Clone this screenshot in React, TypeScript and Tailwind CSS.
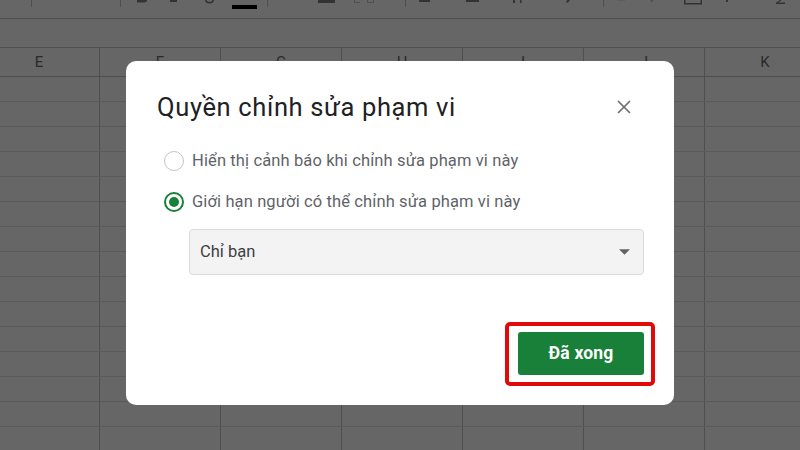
const columns = ["E", "F", "G", "H", "I", "J", "K"];

const Cell = ({ first, last, children }: { first?: boolean; last?: boolean; children?: React.ReactNode }) => (
  <div className={`${first ? "w-[100px] pr-[21px]" : last ? "flex-1 pl-[25px]" : "w-[121px]"} ${last ? "" : "border-r border-[#4f4f4f]"} flex items-center justify-center`}>
    {children}
  </div>
);

function Toolbar() {
  return (
    <div className="relative h-[19px] border-b border-[#4f4f4f] overflow-hidden">
      {/* the top of the sheet is cut off, only the lower ends of the icons show */}
      <svg width="800" height="18" className="block" fill="#333">
        <g fill="#4f4f4f">
          <rect x="31" y="0" width="1" height="7" />
          <rect x="120" y="0" width="1" height="7" />
          <rect x="267" y="0" width="1" height="7" />
          <rect x="405" y="0" width="1" height="7" />
          <rect x="603" y="0" width="1" height="7" />
        </g>
        <path d="M137 0h10v1q-1 1.500-4 1.500h-6z" />
        <rect x="170" y="0" width="7" height="2" />
        <path d="M205 0h1.500q.5 2 3 2t3-2h1.500q-.5 3.500-4.500 3.500t-4.500-3.500z" />
        <rect x="232" y="5" width="25" height="4" fill="#000" />
        <rect x="318" y="0" width="17" height="3" />
        <path d="M354 0h1v2h5v1h-6zM367 0h1v2h5v-2h1v3h-7z" fill="#505050" />
        <rect x="419" y="0" width="11" height="2" />
        <rect x="466" y="0" width="13" height="2" />
        <path d="M513 0h2v3h-2zM520 0h1.500v3h-1.500z" />
        <path d="M567 0h3l-2 2.500h-2z" />
        <path d="M651 0h3l-2 2h-2z" fill="#505050" />
        <path d="M617 0h8v1h-8z" fill="#5c5c5c" />
        <path d="M684 0h1.500v3h15v-3h1.500v4.500h-18z" />
        <rect x="726" y="0" width="2" height="2" />
        <path d="M778 0h3v1l-3 1.500h7v1.500h-9v-1.500l4-2z" />
      </svg>
    </div>
  );
}

export default function App() {
  return (
    <div className="relative w-[800px] h-[450px] overflow-hidden bg-[#666666] font-['Roboto',sans-serif]">
      <Toolbar />
      <div className="h-[29px] border-b border-[#4f4f4f]" />
      <div className="flex h-[29px] border-b border-[#4f4f4f] text-[15px] text-[#2a2a2a]">
        {columns.map((c, i) => (
          <Cell key={c} first={i === 0} last={i === columns.length - 1}>{c}</Cell>
        ))}
      </div>
      {Array.from({ length: 15 }).map((_, r) => (
        <div key={r} className="flex h-[25px] border-b border-[#5a5a5a]">
          {columns.map((c, i) => (
            <Cell key={c} first={i === 0} last={i === columns.length - 1} />
          ))}
        </div>
      ))}

      <div className="absolute inset-0 flex justify-center pt-[61px]">
        <div className="w-[548px] h-[344px] bg-white rounded-[10px] pl-[31px] pr-[19px] flex flex-col">
          <div className="flex items-center justify-between h-[30px] mt-[31px]">
            <h1 className="text-[25.500px] text-[#202124] tracking-[0.64px] font-['Roboto',sans-serif]">Quyền chỉnh sửa phạm vi</h1>
            <svg width="14" height="14" viewBox="0 0 14 14" className="mr-[24px] mt-[-1px]" stroke="#6f6f6f" strokeWidth="1.700">
              <path d="M1 1l12 12M13 1L1 13" />
            </svg>
          </div>

          <label className="flex items-center gap-[8px] h-[20px] mt-[29px] ml-[7px] text-[16.500px] tracking-[0.12px] text-[#5f6368]">
            <span className="w-[20px] h-[20px] rounded-full border border-[#c4c4c4] bg-white" />
            Hiển thị cảnh báo khi chỉnh sửa phạm vi này
          </label>
          <label className="flex items-center gap-[8px] h-[20px] mt-[21px] ml-[7px] text-[16.500px] tracking-[0.12px] text-[#5f6368]">
            <span className="w-[20px] h-[20px] rounded-full border-2 border-[#188038] flex items-center justify-center">
              <span className="w-[10px] h-[10px] rounded-full bg-[#188038]" />
            </span>
            Giới hạn người có thể chỉnh sửa phạm vi này
          </label>

          <div className="flex items-center justify-between h-[46px] w-[455px] mt-[17px] ml-[32px] pl-[10px] pr-[13px] bg-[#f3f3f3] border border-[#dadce0] rounded-[4px] text-[16.500px] text-[#3c4043]">
            Chỉ bạn
            <svg width="11" height="6" viewBox="0 0 12 6" fill="#5f6368"><path d="M0 0h12L6 6z" /></svg>
          </div>

          <div className="flex justify-end mt-[47px]">
            <div className="border-[4px] border-[#e00a0a] rounded-[5px] pt-[6px] pb-[7px] pl-[9px] pr-[7px]">
              <button className="block w-[126px] h-[43px] bg-[#188038] rounded-[3px] text-white text-[17.500px] tracking-[0.2px] font-bold">Đã xong</button>
            </div>
          </div>
        </div>
      </div>
    </div>
  );
}
